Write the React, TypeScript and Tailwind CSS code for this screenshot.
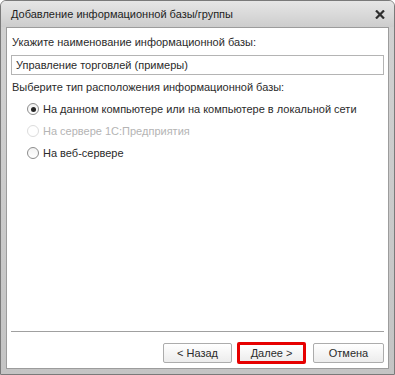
import React from "react";

function Radio({ checked, disabled, label }: { checked?: boolean; disabled?: boolean; label: string }) {
  return (
    <div className="flex items-center h-[22px]">
      <div
        className={
          "w-[12px] h-[12px] rounded-full border flex items-center justify-center " +
          (disabled
            ? "border-[#dcdcdc] bg-white"
            : "border-[#8c8c8c] bg-gradient-to-b from-[#f2f2f2] to-white")
        }
      >
        {checked && <div className="w-[5px] h-[5px] rounded-full bg-[#262626]" />}
      </div>
      <span className={"ml-[4px] text-[11px] leading-[13px] " + (disabled ? "text-[#b4b4b4]" : "text-[#2b2b2b]")}>
        {label}
      </span>
    </div>
  );
}

function Btn({ children, className }: { children: React.ReactNode; className: string }) {
  return (
    <div
      className={
        "flex items-center justify-center text-[11px] leading-[13px] text-[#2b2b2b] rounded-[2px] bg-gradient-to-b from-white to-[#ececec] " +
        className
      }
    >
      {children}
    </div>
  );
}

export default function App() {
  return (
    <div className="w-[395px] h-[375px] flex flex-col rounded-t-[6px] border border-[#7a7a7a] bg-gradient-to-b from-[#d2d2d2] to-[#c4c4c4] overflow-hidden font-['Liberation_Sans',Arial,sans-serif]">
      <div className="h-[26px] flex items-center justify-between pl-[10px] pr-[9px] bg-gradient-to-b from-[#e6e6e6] to-[#cdcdcd]">
        <span className="text-[11px] leading-[13px] text-[#1e1e1e]">Добавление информационной базы/группы</span>
        <svg width="10" height="9" viewBox="0 0 10 9" className="mt-[1px]">
          <path d="M1 0.5 L9 8.5 M9 0.5 L1 8.5" stroke="#2e2e2e" strokeWidth="2.2" />
        </svg>
      </div>
      <div className="flex-1 mx-[5px] mb-[5px] bg-white border border-[#9c9c9c] flex flex-col">
        <div className="px-[4px] pt-[8px]">
          <div className="text-[11px] leading-[13px] text-[#2b2b2b] pl-[1px]">Укажите наименование информационной базы:</div>
          <div className="mt-[6px] h-[20px] border border-[#b4b4b4] flex items-center pl-[4px] text-[11px] leading-[13px] text-[#2b2b2b]">
            Управление торговлей (примеры)
          </div>
          <div className="mt-[6px] text-[11px] leading-[13px] text-[#2b2b2b] pl-[1px]">
            Выберите тип расположения информационной базы:
          </div>
          <div className="mt-[4px] pl-[16px] flex flex-col">
            <Radio checked label="На данном компьютере или на компьютере в локальной сети" />
            <Radio disabled label="На сервере 1С:Предприятия" />
            <Radio label="На веб-сервере" />
          </div>
        </div>
        <div className="flex-1" />
        <div className="mx-[4px] h-[1px] bg-[#a0a0a0]" />
        <div className="mt-[10px] mb-[4px] pr-[4px] flex justify-end items-center h-[22px]">
          <Btn className="w-[69px] h-[20px] border border-[#acacac]">&lt; Назад</Btn>
          <Btn className="ml-[5px] w-[69px] h-[22px] border-[3px] border-[#e60000]">Далее &gt;</Btn>
          <Btn className="ml-[7px] w-[71px] h-[20px] border border-[#acacac]">Отмена</Btn>
        </div>
      </div>
    </div>
  );
}
